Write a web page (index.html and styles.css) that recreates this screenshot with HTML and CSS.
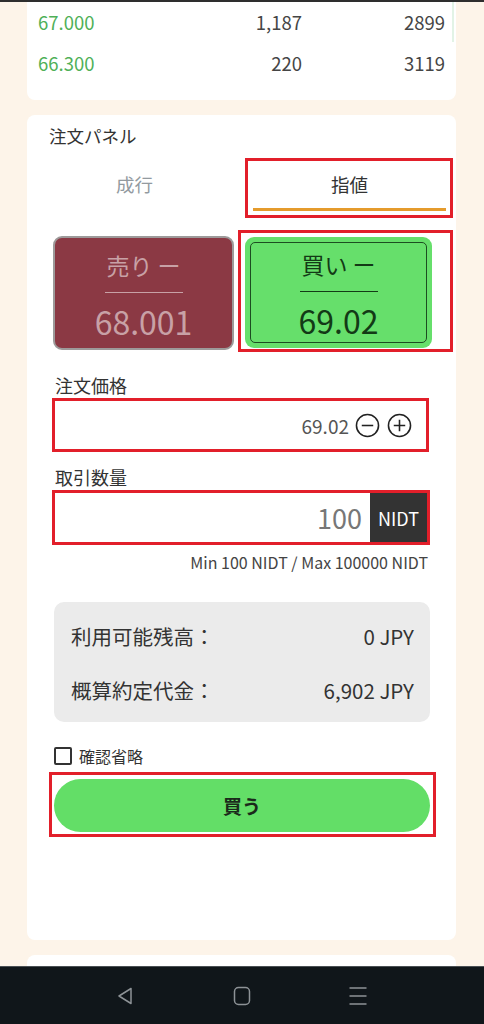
FILE: index.html
```html
<!DOCTYPE html>
<html lang="ja">

<head>
    <meta charset="UTF-8">
    <meta name="viewport" content="width=device-width, initial-scale=1.0">
    <title>注文パネル</title>
    <link rel="stylesheet" href="styles.css">
</head>

<body>
    <div class="topbar"></div>

    <div class="page">
        <!-- order book tail -->
        <div class="card book">
            <div class="book-row">
                <span class="price">67.000</span>
                <span class="qty">1,187</span>
                <span class="total">2899</span>
            </div>
            <div class="book-row">
                <span class="price">66.300</span>
                <span class="qty">220</span>
                <span class="total">3119</span>
            </div>
            <div class="depth"></div>
        </div>

        <!-- order panel -->
        <div class="card panel">
            <div class="panel-title">注文パネル</div>

            <div class="tabs">
                <div class="tab">成行</div>
                <div class="tab active marked">指値</div>
            </div>

            <div class="sides">
                <div class="side sell">
                    <div class="side-label">売り ー</div>
                    <div class="side-line"></div>
                    <div class="side-price">68.001</div>
                </div>
                <div class="side buy marked">
                    <div class="side-inner">
                        <div class="side-label">買い ー</div>
                        <div class="side-line"></div>
                        <div class="side-price">69.02</div>
                    </div>
                </div>
            </div>

            <div class="field-label">注文価格</div>
            <div class="field price-field">
                <span class="field-value">69.02</span>
                <svg class="step" viewBox="0 0 24 24" width="25" height="25">
                    <circle cx="12" cy="12" r="10.6" fill="none" stroke="#222" stroke-width="1.5"/>
                    <path d="M6.5 12h11" stroke="#222" stroke-width="1.5"/>
                </svg>
                <svg class="step" viewBox="0 0 24 24" width="25" height="25">
                    <circle cx="12" cy="12" r="10.6" fill="none" stroke="#222" stroke-width="1.5"/>
                    <path d="M6.5 12h11M12 6.5v11" stroke="#222" stroke-width="1.5"/>
                </svg>
            </div>

            <div class="field-label second">取引数量</div>
            <div class="field qty-field">
                <span class="qty-value">100</span>
                <span class="unit">NIDT</span>
            </div>
            <div class="limits">Min 100 NIDT / Max 100000 NIDT</div>

            <div class="balance">
                <div class="balance-row">
                    <span>利用可能残高：</span>
                    <span>0 JPY</span>
                </div>
                <div class="balance-row">
                    <span>概算約定代金：</span>
                    <span>6,902 JPY</span>
                </div>
            </div>

            <label class="skip">
                <span class="box"></span>
                <span>確認省略</span>
            </label>

            <button class="buy-button marked">買う</button>
        </div>

        <div class="card next"></div>
    </div>

    <div class="navbar">
        <svg viewBox="0 0 20 20" width="20" height="20">
            <path d="M15 2.5v15L3 10z" fill="none" stroke="#8d9296" stroke-width="1.5" stroke-linejoin="round"/>
        </svg>
        <svg viewBox="0 0 20 20" width="20" height="20">
            <rect x="2.5" y="1.5" width="15" height="17" rx="4" fill="none" stroke="#8d9296" stroke-width="1.5"/>
        </svg>
        <svg viewBox="0 0 20 20" width="20" height="20">
            <path d="M1.5 2h17M1.5 10h17M1.5 18h17" stroke="#8d9296" stroke-width="1.5"/>
        </svg>
    </div>
</body>
</html>
```

FILE: styles.css
```css
body {
    font-family: "Noto Sans CJK JP", "Noto Sans", sans-serif;
    background-color: #fdf4e9;
    color: #333;
    margin: 0px;
}

.topbar {
    height: 2px;
    background-color: #2e2e2e;
}

.page {
    padding: 0px 28px 0px 27px;
}

.card {
    background-color: #fff;
    border-radius: 8px;
}

/* order book */

.book {
    position: relative;
    border-radius: 0px 0px 8px 8px;
    padding: 0px 11px 16px 11px;
}

.book-row {
    display: grid;
    grid-template-columns: 1fr 128px 143px;
    height: 41px;
    line-height: 41px;
    font-size: 18.5px;
    color: #454545;
}

.book-row .price {
    color: #4fb058;
}

.book-row .qty,
.book-row .total {
    text-align: right;
}

.depth {
    position: absolute;
    top: 0px;
    right: 2px;
    width: 2px;
    height: 40px;
    background-color: #e2f3e6;
}

/* panel */

.panel {
    margin-top: 15px;
    padding: 9px 26px 108px 26px;
}

.panel-title {
    font-size: 17.5px;
    line-height: 24px;
    margin-left: -4px;
}

.tabs {
    display: flex;
    gap: 22px;
    margin: 13px -16px 0px -15px;
}

.tab {
    flex: 1;
    height: 47px;
    line-height: 47px;
    text-align: center;
    font-size: 18.5px;
    color: #939a9f;
    border-bottom: 3px solid transparent;
}

.tab.active {
    color: #333;
    border-bottom-color: #e59b2c;
}

.marked {
    position: relative;
}

.marked::after {
    content: "";
    position: absolute;
    border: 3px solid #e21f2a;
    pointer-events: none;
}

.tab.marked::after {
    inset: -3px -7px -10px -8px;
}

.sides {
    display: flex;
    gap: 11px;
    margin-top: 25px;
    margin-right: -2px;
}

.side {
    flex: 1;
    height: 114px;
    box-sizing: border-box;
    border-radius: 9px;
}

.sell {
    background-color: #8b3944;
    border: 2px solid #9d9a9a;
    color: #c8a1a6;
    padding-top: 12px;
}

.buy {
    background-color: #66df6b;
    color: #133a16;
    padding: 5px;
    height: 111px;
    margin-top: 1px;
}

.buy.marked::after {
    inset: -7px -21px -4px -7px;
}

.side-inner {
    height: 100%;
    box-sizing: border-box;
    border: 1.5px solid #1d4d21;
    border-radius: 5px;
    padding-top: 6px;
}

.side-label {
    text-align: center;
    font-size: 23px;
    line-height: 30px;
}

.side-line {
    width: 78px;
    height: 1px;
    margin: 12px auto 0px auto;
    background-color: currentColor;
}

.side-price {
    text-align: center;
    font-size: 32px;
    line-height: 40px;
    margin-top: 8px;
}

.field-label {
    font-size: 18px;
    line-height: 22px;
    margin: 24px 0px 0px 2px;
}

.field-label.second {
    margin-top: 14px;
}

.field {
    display: flex;
    align-items: center;
    justify-content: flex-end;
    border: 3px solid #e21f2a;
    margin: 2px 0px 0px -1px;
    box-sizing: border-box;
}

.price-field {
    height: 54px;
    padding-right: 14px;
    gap: 7px;
    margin-right: 1px;
}

.field-value {
    font-size: 19px;
    color: #555;
    margin-right: -1px;
}

.step {
    display: block;
}

.qty-field {
    height: 55px;
    margin-right: 0px;
}

.qty-value {
    font-size: 27px;
    color: #777;
    padding-right: 8px;
}

.unit {
    align-self: stretch;
    width: 57px;
    background-color: #333;
    color: #fff;
    font-size: 18px;
    display: flex;
    align-items: center;
    justify-content: center;
}

.limits {
    text-align: right;
    font-size: 16px;
    line-height: 18px;
    color: #444;
    margin: 8px 2px 0px 0px;
}

.balance {
    background-color: #ebebeb;
    border-radius: 10px;
    margin: 31px 0px 0px 1px;
    padding: 7px 16px 5px 17px;
}

.balance-row {
    display: flex;
    justify-content: space-between;
    height: 54px;
    line-height: 54px;
    font-size: 20.5px;
    color: #333;
}

.skip {
    display: flex;
    align-items: center;
    gap: 7px;
    height: 20px;
    margin: 24px 0px 0px 1px;
    font-size: 16px;
}

.box {
    width: 18px;
    height: 18px;
    box-sizing: border-box;
    border: 2px solid #333;
    border-radius: 2px;
}

.buy-button {
    display: block;
    width: calc(100% - 1px);
    height: 53px;
    margin: 13px 0px 0px 1px;
    border: none;
    border-radius: 27px;
    background-color: #63de67;
    color: #1b2a1b;
    font-family: "Noto Sans CJK JP", sans-serif;
    font-size: 19px;
    font-weight: bold;
}

.buy-button.marked::after {
    inset: -7px -6px -5px -5px;
}

.next {
    margin-top: 15px;
    height: 11px;
    border-radius: 8px 8px 0px 0px;
}

/* system navigation */

.navbar {
    height: 57px;
    background-color: #10161a;
    border-top: 1px solid #4a5054;
    display: flex;
    align-items: center;
    justify-content: center;
    gap: 96px;
}
```
